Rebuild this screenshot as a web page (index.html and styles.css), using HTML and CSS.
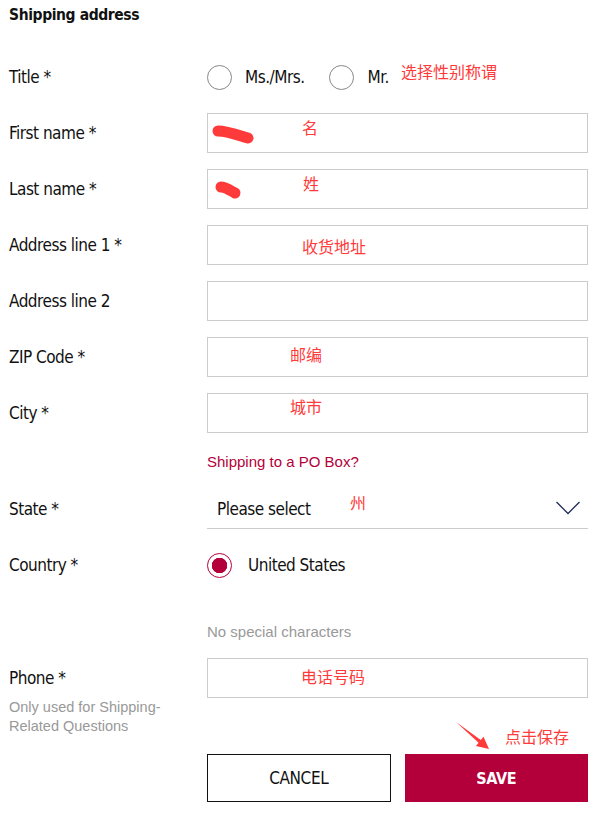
FILE: index.html
```html
<!DOCTYPE html>
<html lang="en">
<head>
    <meta charset="UTF-8">
    <meta name="viewport" content="width=device-width, initial-scale=1.0">
    <title>Shipping address</title>
    <link rel="stylesheet" href="styles.css">
</head>
<body>
    <div class="page">
        <h2 class="heading">Shipping address</h2>

        <form class="form" onsubmit="return false">
            <div class="row">
                <label class="label">Title *</label>
                <div class="radios">
                    <label class="radio"><span class="dot"></span>Ms./Mrs.</label>
                    <label class="radio"><span class="dot"></span>Mr.</label>
                </div>
            </div>

            <div class="row">
                <label class="label">First name *</label>
                <div class="field"></div>
            </div>

            <div class="row">
                <label class="label">Last name *</label>
                <div class="field"></div>
            </div>

            <div class="row">
                <label class="label">Address line 1 *</label>
                <div class="field"></div>
            </div>

            <div class="row">
                <label class="label">Address line 2</label>
                <div class="field"></div>
            </div>

            <div class="row">
                <label class="label">ZIP Code *</label>
                <div class="field"></div>
            </div>

            <div class="row">
                <label class="label">City *</label>
                <div class="field"></div>
            </div>

            <div class="row row-note">
                <span></span>
                <a class="po-link" href="#">Shipping to a PO Box?</a>
            </div>

            <div class="row">
                <label class="label">State *</label>
                <div class="select">
                    <span>Please select</span>
                    <svg class="chevron" width="24" height="14" viewBox="0 0 24 14">
                        <polyline points="0.5,1 12,12.5 23.5,1" fill="none" stroke="#1f2d52" stroke-width="1.3"/>
                    </svg>
                </div>
            </div>

            <div class="row">
                <label class="label">Country *</label>
                <div class="radios">
                    <label class="radio radio-country"><span class="dot checked"></span>United States</label>
                </div>
            </div>

            <div class="row row-hint">
                <span></span>
                <span class="hint">No special characters</span>
            </div>

            <div class="row row-phone">
                <div>
                    <label class="label label-phone">Phone *</label>
                    <p class="note">Only used for Shipping-<br>Related Questions</p>
                </div>
                <div class="field"></div>
            </div>

            <div class="row row-actions">
                <span></span>
                <div class="actions">
                    <button type="button" class="btn btn-cancel">CANCEL</button>
                    <button type="submit" class="btn btn-save">SAVE</button>
                </div>
            </div>
        </form>

        <!-- 标注 -->
        <span class="mark mark-title">选择性别称谓</span>
        <span class="mark mark-first">名</span>
        <span class="mark mark-last">姓</span>
        <span class="mark mark-addr">收货地址</span>
        <span class="mark mark-zip">邮编</span>
        <span class="mark mark-city">城市</span>
        <span class="mark mark-state">州</span>
        <span class="mark mark-phone">电话号码</span>
        <span class="mark mark-save">点击保存</span>

        <svg class="scribble" width="607" height="813" viewBox="0 0 607 813">
            <path d="M218,131 C227,131 238,135 248,138" fill="none" stroke="#ff3a3a" stroke-width="11" stroke-linecap="round"/>
            <path d="M221,187 C226,187 231,191 235,193" fill="none" stroke="#ff3a3a" stroke-width="11" stroke-linecap="round"/>
            <polygon points="456,722 480.8,740 483.5,736.8 489,749 475.9,746 478.6,742.8" fill="#ff3a3a"/>
        </svg>
    </div>
</body>
</html>
```

FILE: styles.css
```css
body {
    margin: 0;
    background: #ffffff;
    color: #111111;
    font-family: "DejaVu Sans Condensed", "Liberation Sans", sans-serif;
}
.page {
    position: relative;
    width: 579px;
    padding: 0 19px 0 9px;
}
.heading {
    margin: 0 0 27px;
    font-size: 15.5px;
    letter-spacing: -0.4px;
    line-height: 30px;
    font-weight: bold;
}
.form {
    display: flex;
    flex-direction: column;
    gap: 16px;
}
.row {
    display: grid;
    grid-template-columns: 198px 381px;
    align-items: center;
    min-height: 40px;
}
.label {
    font-size: 17px;
    letter-spacing: -0.5px;
}
.field {
    height: 38px;
    border: 1px solid #cccccc;
}
.radios {
    display: flex;
    align-items: center;
    gap: 25px;
}
.radio {
    display: flex;
    align-items: center;
    gap: 13px;
    font-size: 17px;
    letter-spacing: -0.5px;
}
.radio-country {
    gap: 16px;
}
.dot {
    box-sizing: border-box;
    width: 25px;
    height: 25px;
    border: 1px solid #888888;
    border-radius: 50%;
}
.dot.checked {
    border-color: #b4003a;
    background: radial-gradient(circle, #b4003a 0 7.5px, transparent 8px);
}
.row-note {
    min-height: 24px;
}
.po-link {
    font-family: "Liberation Sans", Arial, sans-serif;
    font-size: 15px;
    color: #b4003a;
    text-decoration: none;
}
.select {
    display: flex;
    align-items: center;
    justify-content: space-between;
    height: 39px;
    padding: 0 8px 0 10px;
    border-bottom: 1px solid #cccccc;
    font-size: 17px;
    letter-spacing: -0.5px;
}
.chevron {
    margin-top: -2px;
}
.row-hint {
    min-height: 24px;
    margin-top: 18px;
}
.hint {
    font-family: "Liberation Sans", Arial, sans-serif;
    font-size: 15px;
    color: #999999;
}
.row-phone {
    align-items: start;
    margin-top: -1px;
}
.label-phone {
    display: block;
    line-height: 40px;
}
.note {
    margin: 0;
    font-family: "Liberation Sans", Arial, sans-serif;
    font-size: 14.5px;
    line-height: 19px;
    color: #999999;
}
.row-actions {
    margin-top: 2px;
}
.actions {
    display: grid;
    grid-template-columns: 1fr 1fr;
    gap: 14px;
}
.btn {
    height: 48px;
    font-family: "DejaVu Sans Condensed", sans-serif;
    font-size: 17px;
    letter-spacing: -0.4px;
    cursor: pointer;
}
.btn-cancel {
    background: #ffffff;
    border: 1px solid #111111;
    color: #111111;
}
.btn-save {
    background: #b4003a;
    border: none;
    color: #ffffff;
    font-weight: bold;
    font-size: 16px;
}
.mark {
    position: absolute;
    font-family: "Noto Sans CJK SC", sans-serif;
    font-size: 16px;
    line-height: 20px;
    color: #ff3a3a;
}
.mark-title { left: 401px; top: 61px; }
.mark-first { left: 302px; top: 117px; }
.mark-last { left: 303px; top: 173px; }
.mark-addr { left: 302px; top: 236px; }
.mark-zip { left: 290px; top: 344px; }
.mark-city { left: 290px; top: 396px; }
.mark-state { left: 350px; top: 492px; }
.mark-phone { left: 301px; top: 666px; }
.mark-save { left: 505px; top: 726px; }
.scribble {
    position: absolute;
    left: 0;
    top: 0;
    pointer-events: none;
}
```
